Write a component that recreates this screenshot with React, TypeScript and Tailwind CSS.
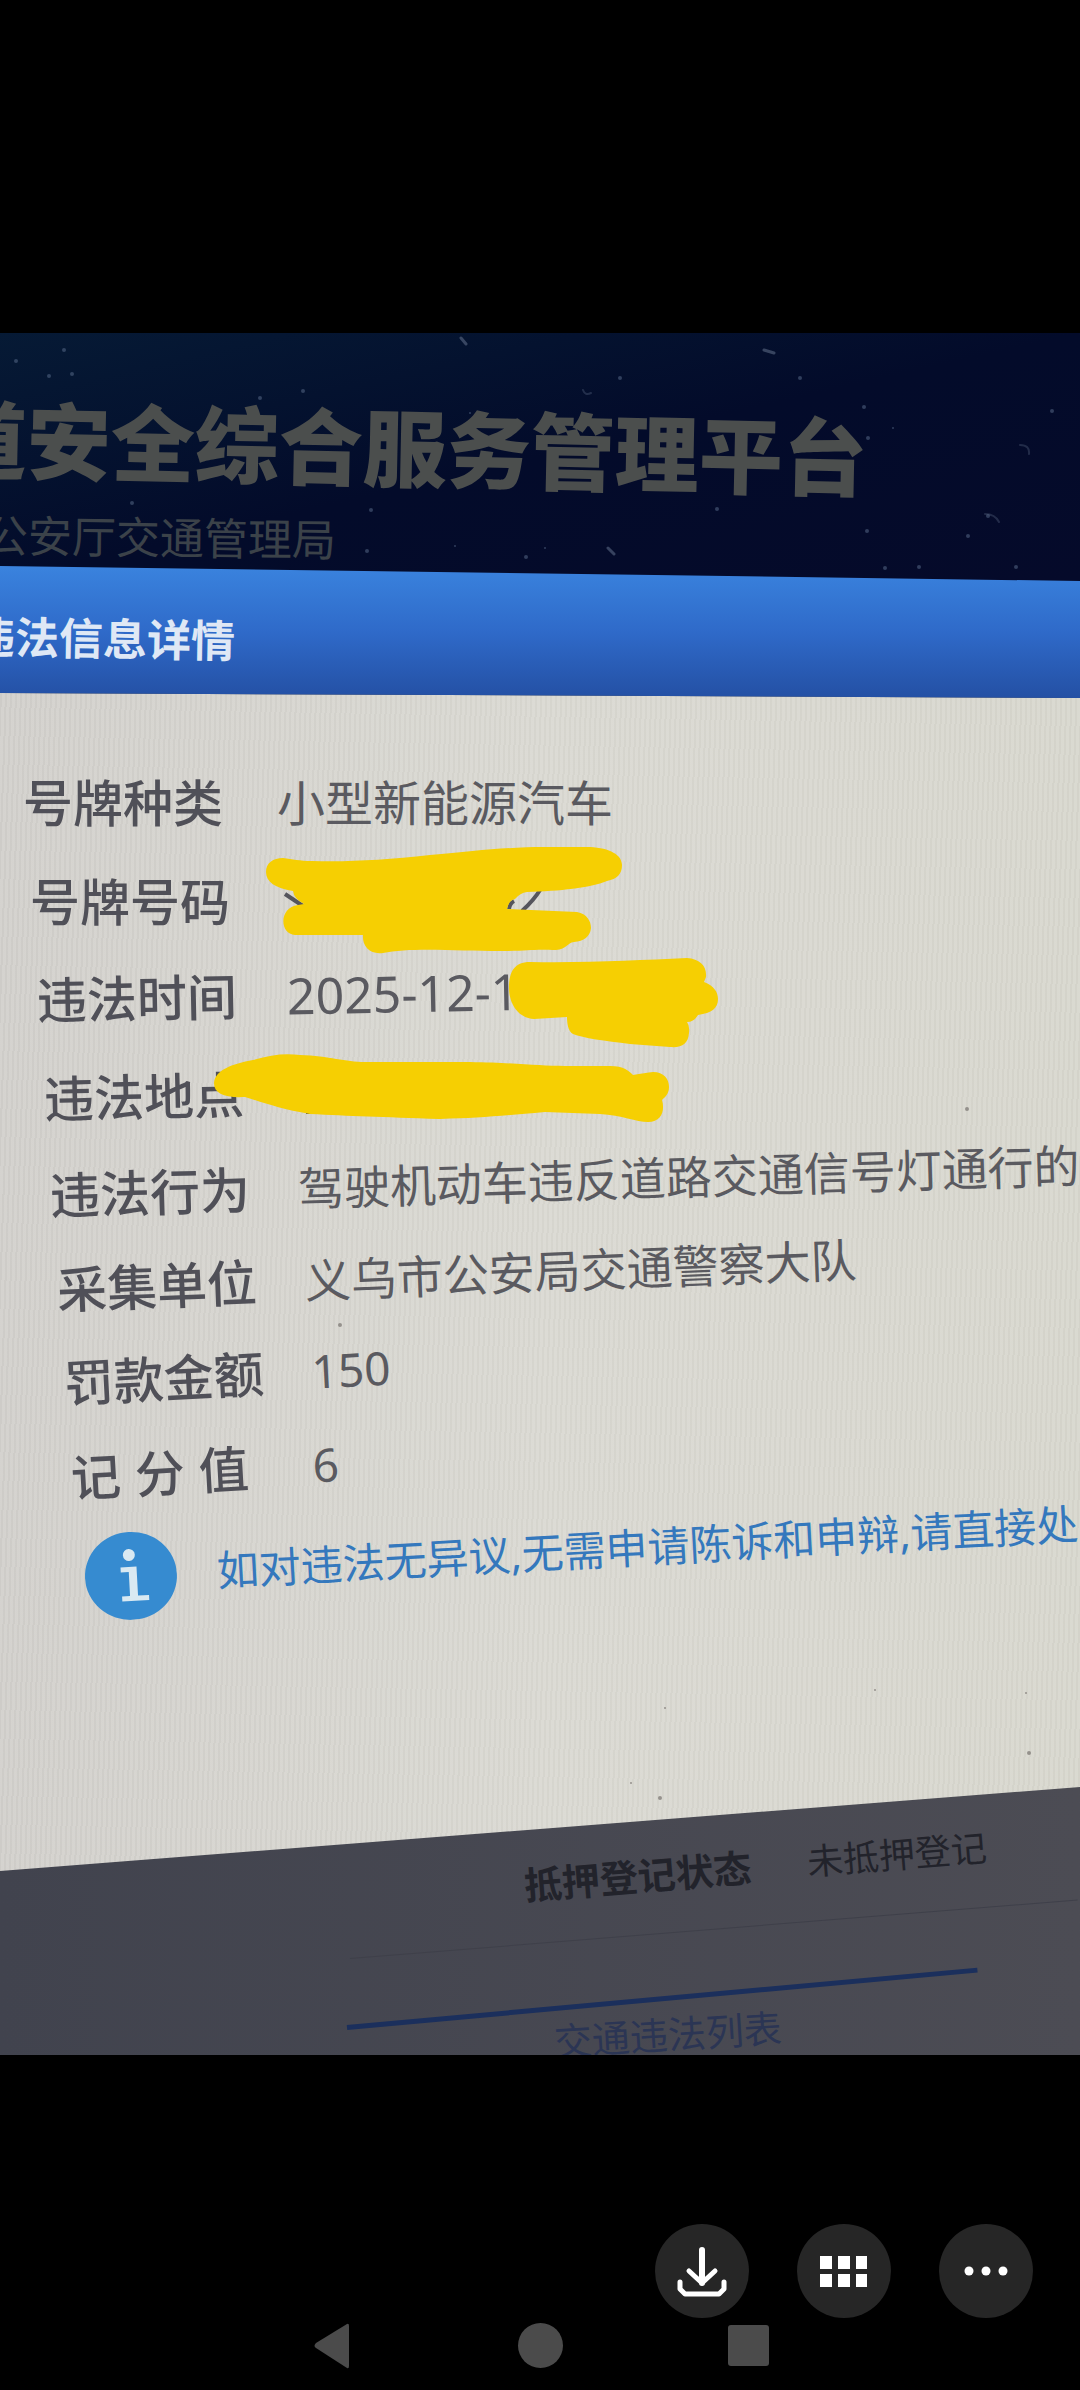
type Field = {
  label: string;
  value: string;
  className: string;
};

const fields: Field[] = [
  { label: "号牌种类", value: "小型新能源汽车", className: "h-[99px] gap-[54px] pl-[23px] text-[48px]" },
  { label: "号牌号码", value: "", className: "h-[99px] gap-[54px] pl-[30px] text-[48px]" },
  { label: "违法时间", value: "2025-12-1", className: "h-[99px] gap-[50px] pl-[37px] -rotate-[1.1deg] text-[50px]" },
  { label: "违法地点", value: "", className: "h-[99px] gap-[50px] pl-[44px] -rotate-[1.3deg] text-[48px]" },
  {
    label: "违法行为",
    value: "驾驶机动车违反道路交通信号灯通行的",
    className: "h-[95px] gap-[48px] pl-[50px] -rotate-[1.7deg] text-[46px]",
  },
  {
    label: "采集单位",
    value: "义乌市公安局交通警察大队",
    className: "h-[95px] gap-[48px] pl-[57px] -rotate-[2.2deg] text-[46px]",
  },
  { label: "罚款金额", value: "150", className: "h-[95px] gap-[48px] pl-[64px] -rotate-[3deg] text-[46px]" },
  { label: "记分值", value: "6", className: "h-[95px] gap-[42px] pl-[71px] -rotate-[3.2deg] text-[46px]" },
];

// dust on the monitor glass: x, y, radius
const headerDust = [
  [64, 17, 2], [16, 28, 2], [49, 43, 2], [72, 41, 2], [303, 58, 2], [260, 65, 2],
  [371, 177, 2], [132, 170, 2], [367, 218, 2], [455, 213, 1], [526, 224, 2],
  [620, 45, 2], [800, 45, 2], [864, 74, 2], [868, 105, 2], [1052, 78, 2],
  [717, 176, 2], [867, 198, 2], [968, 203, 2], [988, 183, 2], [885, 235, 2],
  [919, 234, 2], [1016, 234, 2], [545, 215, 1], [470, 80, 1], [893, 95, 1],
];

const panelDust = [
  [660, 1105, 2], [631, 1090, 1], [1029, 1060, 2], [967, 416, 2], [875, 997, 1],
  [665, 1015, 1], [340, 632, 2], [1026, 1000, 1],
];

function HeaderDust() {
  return (
    <svg
      className="pointer-events-none absolute left-0 top-0 h-[248px] w-[1080px]"
      viewBox="0 0 1080 248"
      aria-hidden="true"
    >
      {headerDust.map(([x, y, r]) => (
        <circle key={`${x}-${y}`} cx={x} cy={y} r={r} fill="#5d6f8d" opacity="0.5" />
      ))}
      <g fill="none" stroke="#6b7a94" strokeWidth="3" strokeLinecap="round" opacity="0.5">
        <path d="M461 5l5 6M764 17l10 3M608 215l6 6" />
        <path d="M583 57q2 6 8 3M1020 112q10 0 9 9M985 181q10 0 14 8" strokeWidth="2" opacity="0.6" />
      </g>
    </svg>
  );
}

function Scribbles() {
  return (
    <svg
      className="pointer-events-none absolute left-0 top-0 h-[1178px] w-[1080px]"
      viewBox="0 0 1080 1178"
      aria-hidden="true"
    >
      {panelDust.map(([x, y, r]) => (
        <circle key={`${x}-${y}`} cx={x} cy={y} r={r} fill="#77746f" opacity="0.7" />
      ))}
      <g transform="translate(0 -691)">
        <g fill="none" stroke="#55555c" strokeWidth="4">
          <path d="M285 892L303 904M509 907q1-6 5-8M540 888Q534 898 522 909" />
          <path d="M306 1111h14" strokeWidth="2" />
        </g>
        <g fill="#f6cf02">
          <path d="M266 870C266 861 273 856 283 856C293 857 299 859 312 859C350 860 385 858 430 853C475 849 505 845 545 845L590 845C610 846 622 853 622 863C622 872 617 877 607 879C590 886 560 889 527 890Q520 891 515 897Q509 898 507 907L577 910C587 912 591 919 591 926C590 935 584 939 574 940C567 941 567 947 556 948C530 947 530 949 500 949C460 949 410 945 383 951C370 953 362 944 363 933L295 933C279 932 279 905 298 903L304 902Q294 897 293 889C275 886 266 880 266 870Z" />
          <path d="M509 986C509 970 514 960 530 960C590 961 640 958 687 956C700 957 707 964 706 975L704 980C714 984 718 990 718 997C718 1006 712 1011 698 1013Q694 1020 687 1020Q690 1024 689 1031C688 1042 682 1046 670 1045L630 1042C605 1039 583 1036 573 1032C568 1029 567 1021 567 1015L534 1017C517 1016 509 1000 509 986Z" />
          <path d="M214 1081C215 1068 232 1062 253 1058C270 1053 284 1051 300 1053C330 1054 345 1060 365 1060L470 1060C520 1061 540 1064 565 1064L610 1064C624 1064 629 1069 633 1073Q645 1071 653 1070C664 1070 669 1077 669 1085C669 1092 665 1095 662 1098C665 1108 662 1120 648 1120C636 1120 622 1113 600 1112L545 1110C500 1114 480 1116 440 1117C380 1115 350 1114 310 1112C280 1107 265 1101 245 1095C225 1096 214 1092 214 1081Z" />
        </g>
      </g>
    </svg>
  );
}

function InfoIcon() {
  return (
    <svg viewBox="0 0 92 90" className="h-[90px] w-[92px] shrink-0" aria-hidden="true">
      <ellipse cx="46" cy="46" rx="46" ry="44" fill="#368bd0" />
      <g fill="#d9e9f2">
        <circle cx="45" cy="25" r="6" />
        <path d="M36 37H52V66H63V71H36V66H44V42H36Z" />
      </g>
    </svg>
  );
}

function FieldRow({ label, value, className }: Field) {
  return (
    <div className={`flex origin-left items-center whitespace-nowrap leading-none ${className}`}>
      <dt className="w-[200px] shrink-0 text-[50px] font-medium text-[#505058]">
        {label === "记分值" ? (
          <span className="flex gap-[14px]">
            {label.split("").map((char) => (
              <span key={char}>{char}</span>
            ))}
          </span>
        ) : (
          label
        )}
      </dt>
      <dd className="text-[#5a5a60]">{value}</dd>
    </div>
  );
}

function Photo() {
  return (
    <section className="relative overflow-hidden bg-[#45464f]">
      <header className="relative h-[248px] whitespace-nowrap bg-linear-to-br from-[#061a35] via-[#030b2a] to-[#050a2a] pt-16 leading-none text-[#4b4e4d]">
        <HeaderDust />
        <h1 className="-ml-[57px] origin-left rotate-[1.2deg] text-[84px] font-black">道安全综合服务管理平台</h1>
        <p className="-ml-[16px] mt-8 origin-left rotate-[0.7deg] text-[44px] text-[#3b4249]">公安厅交通管理局</p>
      </header>

      <div className="relative z-20 -mt-[15px] flex h-[132px] items-center bg-linear-to-b from-[#3a83de] via-[#2f6ac9] to-[#2450a4] pt-2 [clip-path:polygon(0_0,100%_15px,100%_100%,0_calc(100%-5px))]">
        <h2 className="-ml-[29px] origin-left rotate-[1deg] whitespace-nowrap text-[44px] font-bold leading-none text-[#dfe8f5]">
          违法信息详情
        </h2>
      </div>

      <div className="relative z-10 -mt-[5px] h-[1178px] bg-linear-to-r from-[#d3d1cd] via-[#dbdad3] to-[#d9d8cf] pt-[60px] [clip-path:polygon(0_0,100%_5px,100%_calc(100%-84px),0_100%)]">
        <div className="pointer-events-none absolute inset-0 bg-[repeating-linear-gradient(92deg,#00000006_0px,#00000006_2px,#ffffff0a_2px,#ffffff0a_5px)]" />
        <dl className="relative">
          {fields.map((field) => (
            <FieldRow key={field.label} {...field} />
          ))}
        </dl>
        <div className="relative flex h-[102px] origin-left -rotate-[3.1deg] items-center gap-10 pl-[85px] pt-1">
          <InfoIcon />
          <p className="whitespace-nowrap text-[42px] leading-none text-[#3478bd]">
            如对违法无异议,无需申请陈诉和申辩,请直接处
          </p>
        </div>
        <Scribbles />
      </div>

      <footer className="-mt-[84px] h-[268px] overflow-hidden whitespace-nowrap bg-linear-to-r from-[#41434e] to-[#4c4c54] pt-[78px] leading-10">
        <div className="ml-[524px] flex origin-left -rotate-[4.6deg] gap-14 text-[#22232b]">
          <span className="text-[38px] font-bold">抵押登记状态</span>
          <span className="text-[36px]">未抵押登记</span>
        </div>
        <div className="ml-[350px] mt-[53px] h-px origin-left -rotate-[4.6deg] bg-[#3f404a]" />
        <div className="ml-[347px] mt-[66px] h-[5px] w-[633px] origin-left -rotate-[5.2deg] bg-[#1b2f5c]" />
        <p className="-mt-[9px] ml-[554px] origin-left -rotate-[3.5deg] text-[38px] text-[#2b3554]">交通违法列表</p>
      </footer>
    </section>
  );
}

const actionClass = "flex size-[94px] items-center justify-center rounded-full bg-[#262626]";
const navClass = "flex w-[208px] items-center justify-center";

export default function App() {
  return (
    <main className="min-h-screen overflow-hidden bg-black pt-[333px] font-['Noto_Sans','Noto_Sans_CJK_SC',sans-serif]">
      <Photo />

      <div className="mt-[169px] flex justify-end gap-12 pr-[47px]">
        <button type="button" aria-label="下载" className={actionClass}>
          <svg viewBox="0 0 94 94" className="size-[94px]" fill="none" stroke="#fff" strokeWidth="5" strokeLinecap="round" strokeLinejoin="round">
            <path d="M47 26V59" strokeWidth="6" />
            <path d="M34 47L47 59L60 47" />
            <path d="M25 58V65L30 70H64L69 65V58" />
          </svg>
        </button>
        <button type="button" aria-label="全部图片" className={actionClass}>
          <svg viewBox="0 0 94 94" className="size-[94px]" fill="#fff">
            <path d="M23 32h12v13H23zM41 32h12v13H41zM59 32h11v13H59zM23 50h12v13H23zM41 50h12v13H41zM59 50h11v13H59z" />
          </svg>
        </button>
        <button type="button" aria-label="更多" className={actionClass}>
          <svg viewBox="0 0 94 94" className="size-[94px]" fill="#fff">
            <circle cx="30" cy="47" r="4.5" />
            <circle cx="47" cy="47" r="4.5" />
            <circle cx="64" cy="47" r="4.5" />
          </svg>
        </button>
      </div>

      <nav className="flex h-[72px] items-start justify-center pt-[5px]">
        <button type="button" aria-label="返回" className={navClass}>
          <svg viewBox="0 0 36 46" className="h-[46px] w-9" fill="#4b4b4b">
            <path d="M33 1Q35 0 35 3V43Q35 46 33 45L2 25Q-1 23 2 20Z" />
          </svg>
        </button>
        <button type="button" aria-label="主页" className={navClass}>
          <span className="size-[45px] rounded-full bg-[#4b4b4b]" />
        </button>
        <button type="button" aria-label="最近任务" className={navClass}>
          <span className="mt-[2px] size-[41px] rounded-[3px] bg-[#4b4b4b]" />
        </button>
      </nav>
    </main>
  );
}
